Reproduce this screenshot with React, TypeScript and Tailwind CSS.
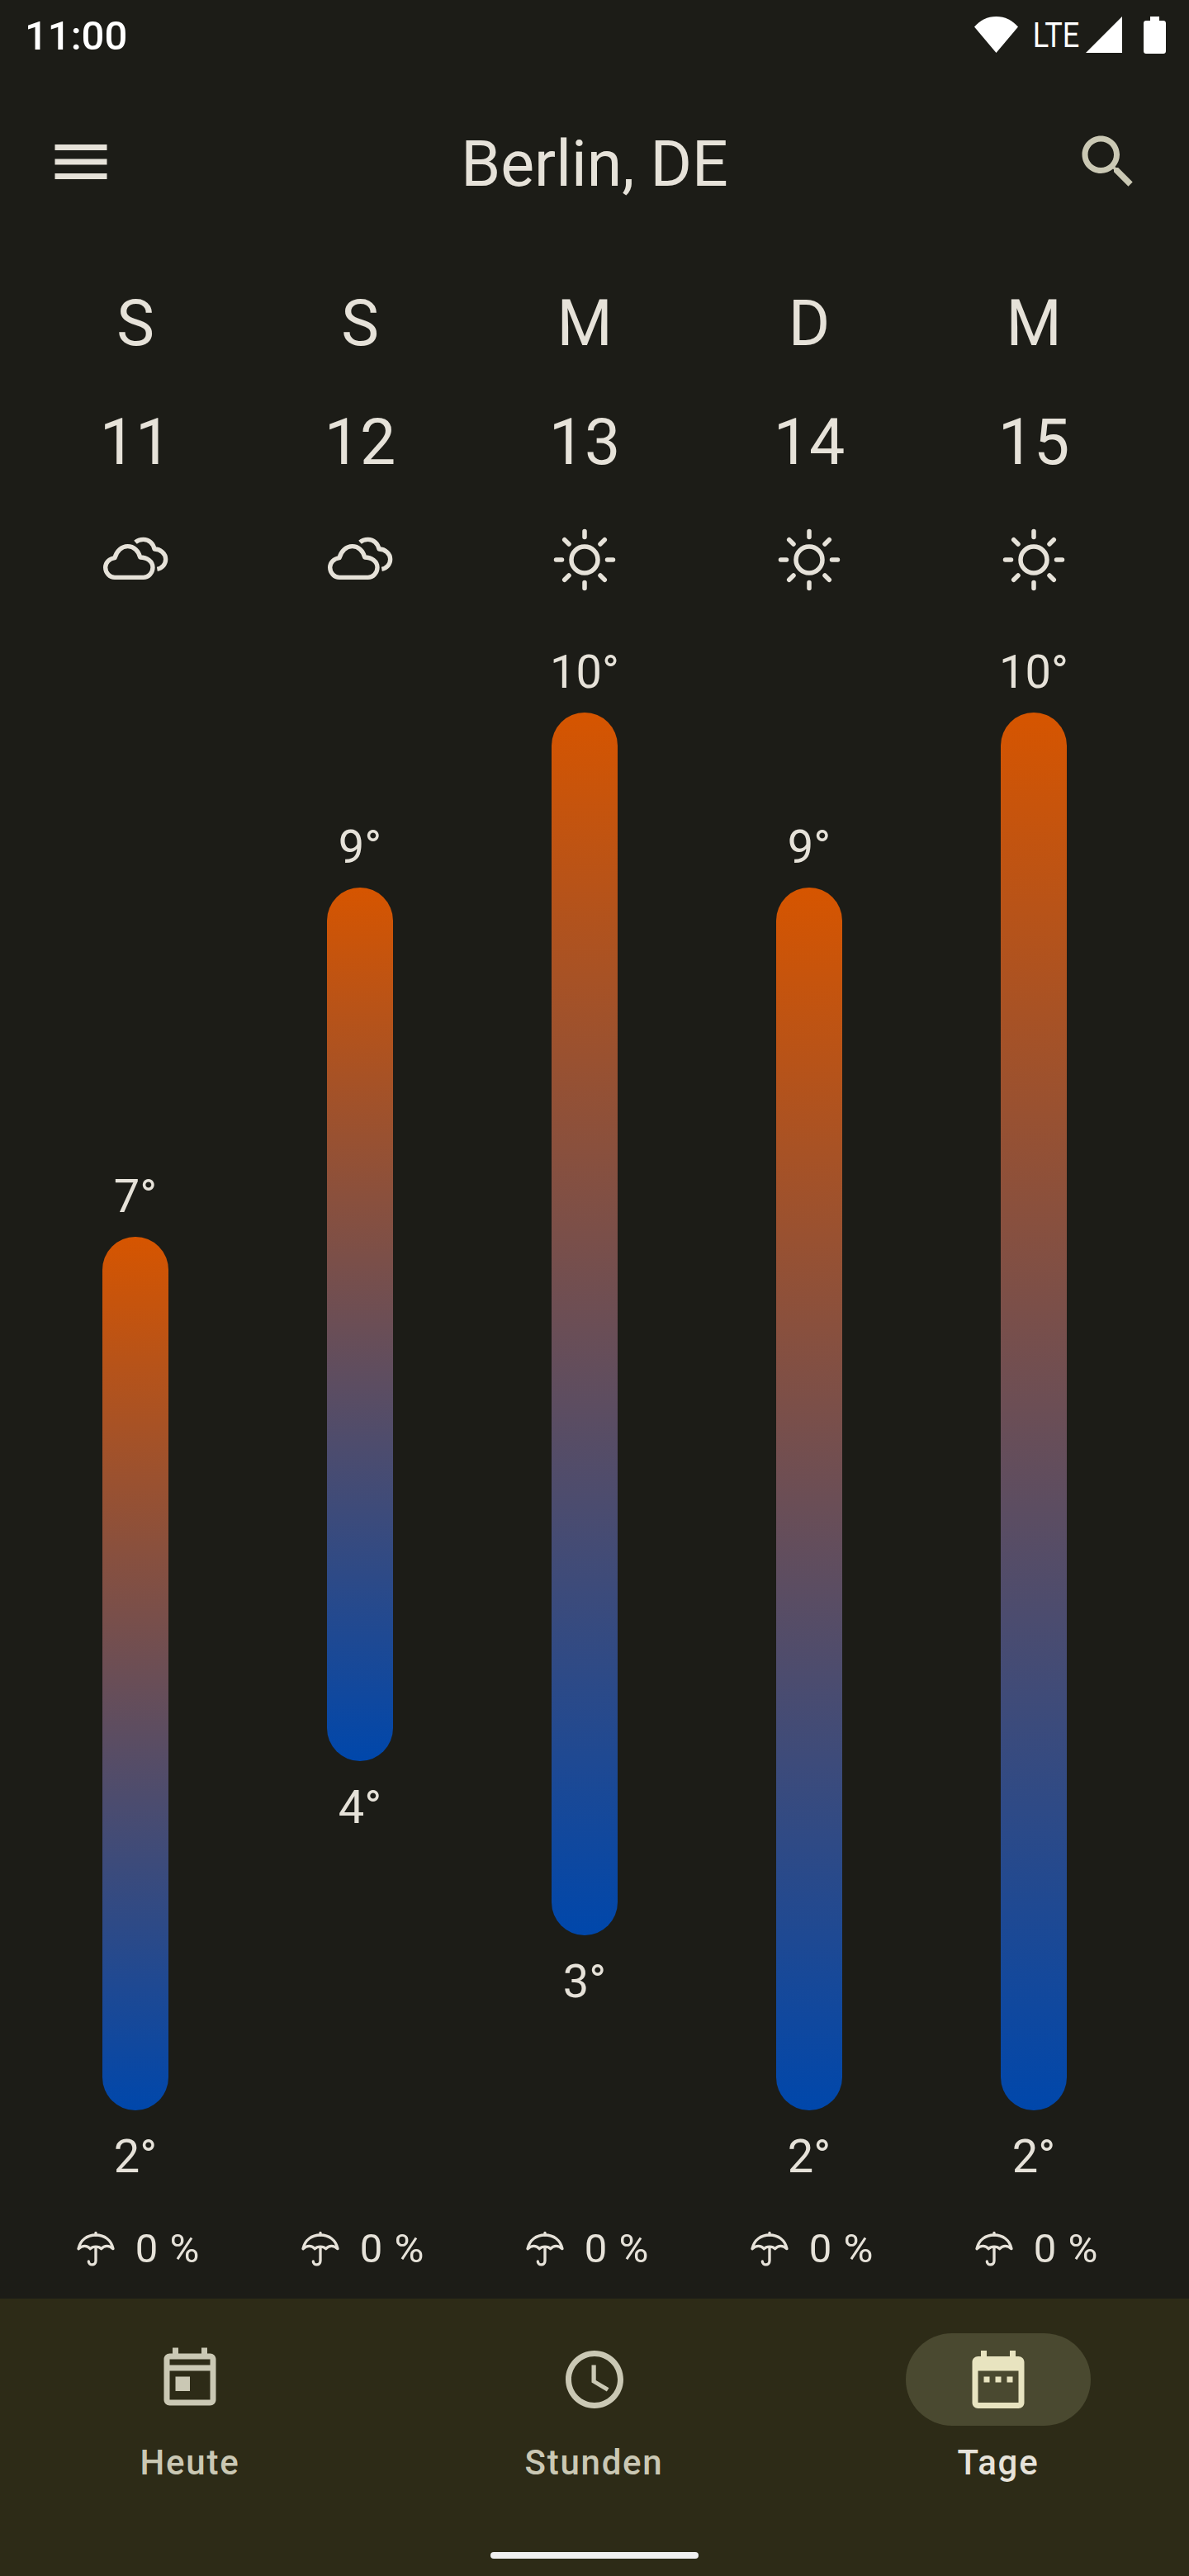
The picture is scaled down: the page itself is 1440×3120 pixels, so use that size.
import React from "react";

const days = [
  { d: "S", n: "11", hi: 7, lo: 2, icon: "cloud" },
  { d: "S", n: "12", hi: 9, lo: 4, icon: "cloud" },
  { d: "M", n: "13", hi: 10, lo: 3, icon: "sun" },
  { d: "D", n: "14", hi: 9, lo: 2, icon: "sun" },
  { d: "M", n: "15", hi: 10, lo: 2, icon: "sun" },
];

const PX_PER_DEGREE = 211.6;

function Cloud() {
  return (
    <svg width="84" height="84" viewBox="67 18 252 252" fill="none" stroke="#e6e2d9" strokeWidth="16" strokeLinecap="round" strokeLinejoin="round">
      <path d="M118 208C100 208 84 192 84 172C84 154 98 140 118 137C125 112 143 95 165 95C187 95 205 112 210 135C235 135 256 150 256 172C256 192 240 208 222 208Z" />
      <path d="M193 80C202 72 212 70 222 70C243 70 258 85 262 105C285 105 303 122 303 142C303 160 290 175 272 178" strokeLinecap="butt" />
    </svg>
  );
}

function Sun() {
  return (
    <svg width="84" height="84" viewBox="-42 -42 84 84" fill="none" stroke="#e6e2d9" strokeWidth="5.5" strokeLinecap="round">
      <circle cx="0" cy="0" r="16" />
      <path d="M0 -34.5V-27.5M0 34.5V27.5M-34.5 0H-27.5M34.5 0H27.5M-24.3 -24.3L-19 -19M24.3 -24.3L19 -19M-24.3 24.3L-19 19M24.3 24.3L19 19" />
    </svg>
  );
}

function Umbrella() {
  return (
    <svg width="60" height="60" viewBox="21 39 180 180" fill="none" stroke="#e6e2d9" strokeWidth="10" strokeLinecap="round" strokeLinejoin="round">
      <path d="M48 128C55 95 80 78 111 78C142 78 167 95 174 128C160 115 142 115 131 128C122 118 100 118 91 128C80 115 62 115 48 128Z" />
      <path d="M111 70V78M111 124V172C111 190 85 190 85 174" />
    </svg>
  );
}

function NavItem({ label, active, path }: { label: string; active?: boolean; path: string }) {
  return (
    <div className="flex w-[224px] flex-col items-center">
      <div className={`flex h-[112px] w-[224px] items-center justify-center rounded-full ${active ? "bg-[#4a4930]" : ""}`}>
        <svg width="84" height="84" viewBox="0 0 24 24" fill={active ? "#e8e4c0" : "#cac8b4"} fillRule="evenodd">
          <path d={path} />
        </svg>
      </div>
      <div className={`mt-[15px] text-[42px] leading-[60px] font-medium tracking-[1.75px] ${active ? "text-[#e6e2d9]" : "text-[#cac8b4]"}`}>
        {label}
      </div>
    </div>
  );
}

export default function App() {
  return (
    <div className="flex min-h-[3120px] flex-col bg-[#1c1c17] font-['Roboto',sans-serif] text-[#e6e2d9]">
      <div className="flex h-[84px] items-center justify-between pr-[28px] pl-[30px] text-white">
        <span className="pt-[3px] text-[49px] leading-none font-medium">11:00</span>
        <div className="flex items-center">
          <svg width="53" height="44" viewBox="0 0 53 44" fill="#fff">
            <path d="M26.5 44L0 12.5C7 4.5 16 0 26.5 0S46 4.5 53 12.5Z" />
          </svg>
          <span className="ml-[18px] w-[56px] text-center text-[43px] leading-none font-normal">
            <span className="-mx-[10px] inline-block w-[76px] scale-x-[0.84]">LTE</span>
          </span>
          <svg className="ml-[8px]" width="44" height="44" viewBox="0 0 44 44" fill="#fff">
            <path d="M44 0V44H0Z" />
          </svg>
          <svg className="ml-[26px]" width="27" height="45" viewBox="0 0 27 45" fill="#fff">
            <path d="M8 0H19V5H24C25.7 5 27 6.3 27 8V42C27 43.7 25.7 45 24 45H3C1.3 45 0 43.7 0 42V8C0 6.3 1.3 5 3 5H8Z" />
          </svg>
        </div>
      </div>

      <header className="mt-[70px] flex h-[84px] items-center justify-between pr-[56px] pl-[56px]">
        <svg width="84" height="84" viewBox="0 0 24 24" fill="#e6e2d9">
          <path d="M3 18h18v-2H3v2zm0-5h18v-2H3v2zm0-7v2h18V6H3z" />
        </svg>
        <h1 className="pt-[7px] text-[77px] leading-none font-normal">Berlin, DE</h1>
        <svg width="84" height="84" viewBox="0 0 24 24" fill="#cac8b4">
          <path d="M15.5 14h-.79l-.28-.27C15.41 12.59 16 11.11 16 9.5 16 5.91 13.09 3 9.5 3S3 5.91 3 9.5 5.91 16 9.5 16c1.61 0 3.09-.59 4.23-1.57l.27.28v.79l5 4.99L20.49 19l-4.99-5zm-6 0C7.01 14 5 11.99 5 9.5S7.01 5 9.5 5 14 7.01 14 9.5 11.99 14 9.5 14z" />
        </svg>
      </header>

      <main className="mt-[112px] grid grid-cols-5 pr-[52px] pl-[28px]">
        {days.map((day, i) => (
          <div key={i} className="flex flex-col items-center">
            <div className="text-[77px] leading-[84px]">{day.d}</div>
            <div className="mt-[60px] text-[77px] leading-[84px]">{day.n}</div>
            <div className="mt-[58px] h-[84px]">{day.icon === "cloud" ? <Cloud /> : <Sun />}</div>
            <div className="flex h-[1969px] flex-col items-center pt-[61px]">
              <div style={{ marginTop: (10 - day.hi) * PX_PER_DEGREE }} className="text-[56px] leading-[66px]">
                {day.hi}°
              </div>
              <div
                style={{ height: (day.hi - day.lo) * PX_PER_DEGREE }}
                className="mt-[16px] w-[80px] rounded-full bg-linear-to-b/srgb from-[#d65500] to-[#0047ab]"
              />
              <div className="mt-[23px] text-[56px] leading-[66px]">{day.lo}°</div>
            </div>
            <div className="flex h-[70px] items-center text-[49px] leading-[70px] tracking-[1px]">
              <Umbrella />
              <span className="ml-[18px]">0 %</span>
            </div>
          </div>
        ))}
      </main>

      <nav className="relative mt-auto h-[336px] bg-[#2d2b17] pt-[42px]">
        <div className="flex justify-between pr-[119px] pl-[118px]">
          <NavItem label="Heute" path="M19 3h-1V1h-2v2H8V1H6v2H5c-1.1 0-2 .9-2 2v14c0 1.1.9 2 2 2h14c1.1 0 2-.9 2-2V5c0-1.1-.9-2-2-2zm0 16H5V9h14v10zm0-12H5V5h14v2zM7 11h5v5H7z" />
          <NavItem label="Stunden" path="M11.99 2C6.47 2 2 6.48 2 12s4.47 10 9.99 10C17.52 22 22 17.52 22 12S17.52 2 11.99 2zM12 20c-4.42 0-8-3.58-8-8s3.58-8 8-8 8 3.58 8 8-3.58 8-8 8zm.5-13H11v6l5.25 3.15.75-1.23-4.5-2.67z" />
          <NavItem active label="Tage" path="M19 4h-1V2h-2v2H8V2H6v2H5c-1.11 0-2 .9-2 2v14c0 1.1.89 2 2 2h14c1.1 0 2-.9 2-2V6c0-1.1-.9-2-2-2zm0 16H5V9h14v11zM7 11h2v2H7zm4 0h2v2h-2zm4 0h2v2h-2z" />
        </div>
        <div className="absolute bottom-[21px] left-[594px] h-[8px] w-[252px] rounded-full bg-[#f0f0f0]" />
      </nav>
    </div>
  );
}
